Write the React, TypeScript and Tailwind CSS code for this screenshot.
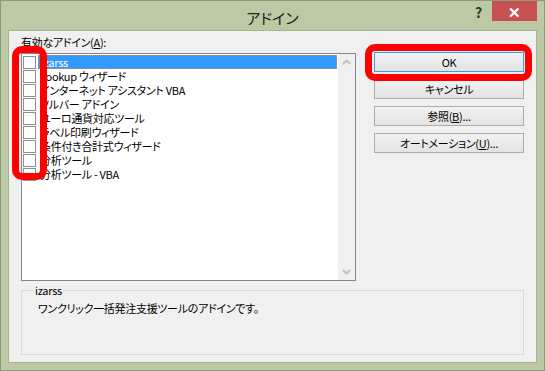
import React from 'react';

const addins = [
  'izarss',
  'Lookup ウィザード',
  'インターネット アシスタント VBA',
  'ソルバー アドイン',
  'ユーロ通貨対応ツール',
  'ラベル印刷ウィザード',
  '条件付き合計式ウィザード',
  '分析ツール',
  '分析ツール - VBA',
];

function Chevron({ down }: { down?: boolean }) {
  return (
    <svg width="9" height="6" viewBox="0 0 9 6" className={down ? 'rotate-180' : ''}>
      <path d="M1 5 L4.5 1.5 L8 5" fill="none" stroke="#c2c2c2" strokeWidth="2" />
    </svg>
  );
}

function DialogButton({ children, isDefault }: { children: React.ReactNode; isDefault?: boolean }) {
  return (
    <button
      className={`h-[20px] w-full border bg-gradient-to-b from-[#f2f2f2] to-[#e3e3e3] leading-[18px] text-black ${
        isDefault ? 'border-[#3c9ae6]' : 'border-[#acacac]'
      }`}
    >
      {children}
    </button>
  );
}

export default function App() {
  return (
    <div className="relative flex h-[371px] w-[545px] flex-col border border-[#8c9a7a] bg-[#bbcaa4] font-['Noto_Sans_CJK_JP','Liberation_Sans',sans-serif] text-[11px] tracking-[-0.3px] text-black [font-feature-settings:'palt']">
      {/* title bar */}
      <div className="grid h-[29px] grid-cols-[1fr_auto_1fr]">
        <div />
        <div className="pt-[7px] text-[15px] leading-[20px] tracking-normal text-[#222]">アドイン</div>
        <div className="flex items-start justify-end pr-[7px]">
          <span className="mr-[10px] mt-[2px] text-[14px] font-bold leading-[18px] text-[#333]">?</span>
          <div className="flex h-[20px] w-[45px] items-center justify-center bg-[#c75050] text-[15px] font-bold leading-none text-white">
            ✕
          </div>
        </div>
      </div>

      {/* client area */}
      <div className="mx-[7px] mb-[7px] flex flex-1 flex-col border border-[#a5b390] bg-[#f0f0f0] pl-[12px] pt-[4px]">
        <div className="flex gap-[18px]">
          <div className="w-[335px]">
            <div className="h-[14px] leading-[14px]">
              有効なアドイン(<span className="underline">A</span>):
            </div>
            <div className="mt-[4px] flex h-[228px] border border-[#828790] bg-white">
              <div className="flex-1 pl-[1px] pt-[1px]">
                {addins.map((name, i) => (
                  <div key={name} className="flex h-[14px] items-center">
                    <div className="h-[13px] w-[13px] border border-[#8e8f8f] bg-white" />
                    <div
                      className={`ml-[2px] mr-[1px] flex h-[14px] flex-1 items-center px-[2px] leading-[12px] ${
                        i === 0 ? 'border border-dotted border-[#e0883a] bg-[#3399ff] text-white' : ''
                      }`}
                    >
                      {name}
                    </div>
                  </div>
                ))}
              </div>
              <div className="flex w-[17px] flex-col items-center justify-between bg-[#f0f0f0] py-[5px]">
                <Chevron />
                <Chevron down />
              </div>
            </div>
          </div>

          <div className="flex w-[150px] flex-col gap-[7px] pt-[17px]">
            <DialogButton isDefault>OK</DialogButton>
            <DialogButton>キャンセル</DialogButton>
            <DialogButton>
              参照(<span className="underline">B</span>)...
            </DialogButton>
            <DialogButton>
              オートメーション(<span className="underline">U</span>)...
            </DialogButton>
          </div>
        </div>

        <fieldset className="mt-[2px] h-[72px] w-[503px] border border-[#d9d9d9] pl-[16px]">
          <legend className="ml-[-5px] px-[2px] leading-[14px]">izarss</legend>
          <div className="pt-[4px] leading-[14px]">ワンクリック一括発注支援ツールのアドインです。</div>
        </fieldset>
      </div>

      {/* red annotation frames */}
      <div className="absolute left-[11px] top-[45px] h-[134px] w-[35px] rounded-[10px] border-[7px] border-[#ff0000]" />
      <div className="absolute left-[364px] top-[43px] h-[37px] w-[167px] rounded-[10px] border-[7px] border-[#ff0000]" />
    </div>
  );
}
